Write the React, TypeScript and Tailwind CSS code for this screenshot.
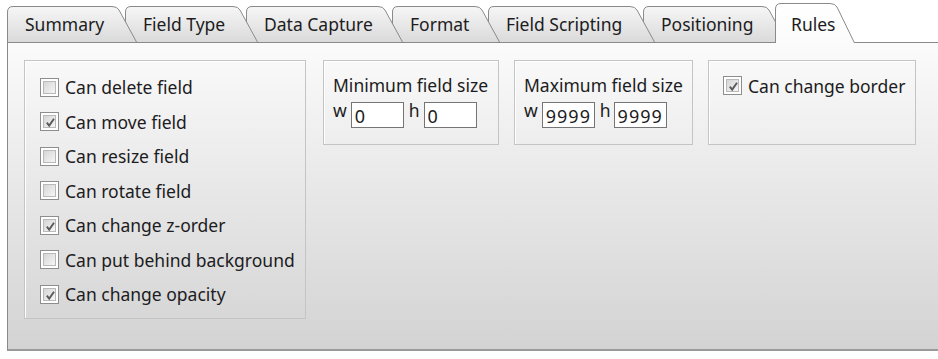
import React from "react";

const tabs = [
  { label: "Summary", width: 130, ml: 0, z: "z-[7]" },
  { label: "Field Type", width: 133, ml: -12, z: "z-[6]" },
  { label: "Data Capture", width: 157, ml: -12, z: "z-[5]" },
  { label: "Format", width: 108, ml: -11, z: "z-[4]" },
  { label: "Field Scripting", width: 167, ml: -12, z: "z-[3]" },
  { label: "Positioning", width: 144, ml: -12, z: "z-[2]" },
  { label: "Rules", width: 80, ml: -12, z: "z-[8]", active: true },
];

function Tab({ label, width, ml, z, active }: { label: string; width: number; ml: number; z: string; active?: boolean }) {
  const h = active ? 40 : 36;
  const id = "tabfill-" + label.replace(/\s/g, "");
  const d = `M0.5 ${h} V6 Q0.5 0.5 6 0.5 H${width - 25} Q${width - 20} 0.5 ${width - 18} 4 L${width - 0.5} ${h}`;
  return (
    <div
      className={`relative shrink-0 ${z} ${active ? "h-[40px] -mb-px pt-[11px] pl-[16px]" : "h-[36px] pt-[8px] pl-[18px]"}`}
      style={{ width, marginLeft: ml }}
    >
      <svg className="absolute left-0 top-0 overflow-visible" width={width} height={h}>
        <defs>
          <linearGradient id={id} x1="0" y1="0" x2="0" y2="1">
            <stop offset="0" stopColor={active ? "#ffffff" : "#f6f6f6"} />
            <stop offset="1" stopColor={active ? "#fbfbfb" : "#dadada"} />
          </linearGradient>
        </defs>
        <path d={d} fill={`url(#${id})`} stroke="#8a8a8a" strokeWidth="1" />
      </svg>
      <span className="relative block leading-[20px] whitespace-nowrap text-[#1c1c22]">{label}</span>
    </div>
  );
}

function Checkbox({ checked }: { checked?: boolean }) {
  return (
    <div className="w-[19px] h-[19px] shrink-0 border border-[#8e8e8e] bg-white p-[2px]">
      <div className="relative w-full h-full border border-[#b9b9b9] bg-gradient-to-br from-[#d6d6d6] to-[#f6f6f6]">
        {checked && (
          <svg className="absolute inset-0" viewBox="0 0 13 13" width="13" height="13">
            <path d="M2.8 6.6 L5.2 9.6 L10 2.8" fill="none" stroke="#5a5a5a" strokeWidth="1.9" />
          </svg>
        )}
      </div>
    </div>
  );
}

function CheckRow({ label, checked }: { label: string; checked?: boolean }) {
  return (
    <div className="flex items-center h-[34.5px] gap-[6px]">
      <Checkbox checked={checked} />
      <span className="leading-[20px] whitespace-nowrap">{label}</span>
    </div>
  );
}

function SizeGroup({ title, w, h, hLeft }: { title: string; w: string; h: string; hLeft: number }) {
  return (
    <div className="flex flex-col pl-[9px] pt-[14px]">
      <div className="leading-[20px] whitespace-nowrap">{title}</div>
      <div className="flex items-start mt-[5px]">
        <span className="leading-[20px]">w</span>
        <div className="mt-[2px] ml-[4px] w-[53px] h-[26px] border border-[#757575] bg-white pl-[3px] pt-[1px] leading-[24px] text-[18px] tracking-[1px]">
          {w}
        </div>
        <span className="leading-[20px] ml-[5px]">h</span>
        <div className="mt-[2px] w-[53px] h-[26px] border border-[#757575] bg-white pl-[3px] pt-[1px] leading-[24px] text-[18px] tracking-[1px]" style={{ marginLeft: hLeft }}>
          {h}
        </div>
      </div>
    </div>
  );
}

export default function App() {
  return (
    <div className="w-[938px] h-[359px] bg-white font-['Noto_Sans',sans-serif] text-[17.5px] text-[#1c1c22] overflow-hidden">
      <div className="relative z-10 mt-[3px] h-[39px] pl-[7px] flex items-end">
        {tabs.map((t) => (
          <Tab key={t.label} {...t} />
        ))}
      </div>
      <div className="ml-[7px] w-[931px] h-[309px] border-l border-t border-b-2 border-l-[#8a8a8a] border-t-[#8a8a8a] border-b-[#9a9a9a] bg-gradient-to-b from-[#fbfbfb] to-[#d3d3d3] pl-[16px] pt-[17px] flex items-start">
        <div className="w-[282px] h-[259px] border border-[#c4c4c4] shadow-[inset_1px_1px_0_#ffffff] pl-[15px] pt-[9px] flex flex-col">
          <CheckRow label="Can delete field" />
          <CheckRow label="Can move field" checked />
          <CheckRow label="Can resize field" />
          <CheckRow label="Can rotate field" />
          <CheckRow label="Can change z-order" checked />
          <CheckRow label="Can put behind background" />
          <CheckRow label="Can change opacity" checked />
        </div>
        <div className="ml-[17px] w-[176px] h-[85px] border border-[#c4c4c4] shadow-[inset_1px_1px_0_#ffffff]">
          <SizeGroup title="Minimum field size" w="0" h="0" hLeft={4} />
        </div>
        <div className="ml-[15px] w-[179px] h-[85px] border border-[#c4c4c4] shadow-[inset_1px_1px_0_#ffffff]">
          <SizeGroup title="Maximum field size" w="9999" h="9999" hLeft={3} />
        </div>
        <div className="ml-[15px] w-[208px] h-[85px] border border-[#c4c4c4] shadow-[inset_1px_1px_0_#ffffff] pl-[14px] pt-[15px]">
          <div className="flex items-center gap-[6px] h-[19px]">
            <Checkbox checked />
            <span className="leading-[20px] whitespace-nowrap">Can change border</span>
          </div>
        </div>
      </div>
    </div>
  );
}
